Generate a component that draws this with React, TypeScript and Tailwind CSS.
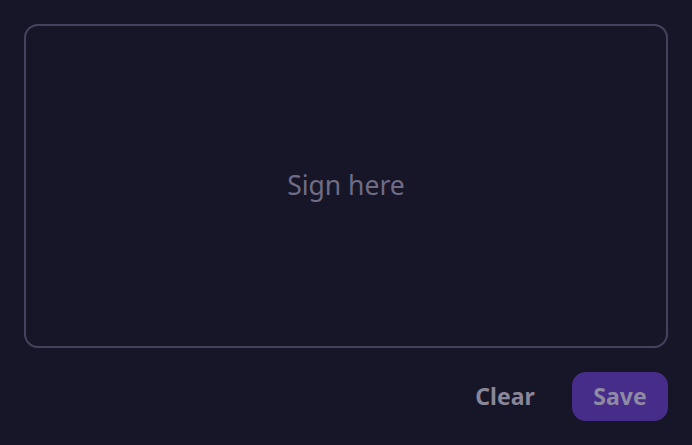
export default function App() {
  return (
    <div
      className="w-[692px] h-[445px] bg-[#171628] p-6 flex flex-col"
      style={{ fontFamily: '"Noto Sans", "Open Sans", sans-serif' }}
    >
      <div className="h-[324px] rounded-[14px] border-2 border-[#45435c] flex items-center justify-center">
        <span className="text-[26.5px] text-[#6f6c86]">Sign here</span>
      </div>
      <div className="mt-6 flex justify-end gap-[19px]">
        <button
          type="button"
          className="w-[96px] h-[49px] rounded-[14px] text-[23px] font-bold text-[#8a8699]"
        >
          Clear
        </button>
        <button
          type="button"
          className="w-[96px] h-[49px] rounded-[14px] bg-[#472d8a] text-[23px] font-bold text-[#8f8aa3]"
        >
          Save
        </button>
      </div>
    </div>
  );
}
